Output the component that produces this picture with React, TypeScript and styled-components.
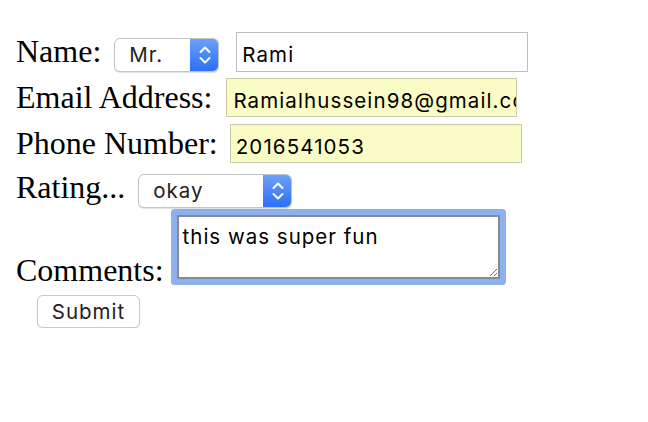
import React from "react";
import styled, { createGlobalStyle } from "styled-components";

const Global = createGlobalStyle`
  html, body { margin: 0; padding: 0; background: #fff; }
  body { font-family: "Liberation Serif", "Times New Roman", serif; color: #000; }
`;

const Form = styled.form`
  display: flex;
  flex-direction: column;
  align-items: flex-start;
  gap: 6px;
  padding: 32px 0 0 16px;
`;

const Row = styled.div<{ $align?: string; $mt?: number }>`
  display: flex;
  align-items: ${(p) => p.$align || "baseline"};
  margin-top: ${(p) => p.$mt || 0}px;
`;

const Label = styled.label<{ $gap: number }>`
  font-family: "Liberation Serif", "Times New Roman", serif;
  font-size: 32px;
  line-height: normal;
  margin-right: ${(p) => p.$gap}px;
  white-space: nowrap;
`;

const uiFont = `"Inter", "Liberation Sans", Arial, sans-serif`;

const SelectBox = styled.div<{ $w: number }>`
  display: inline-flex;
  align-items: baseline;
  box-sizing: border-box;
  width: ${(p) => p.$w}px;
  height: 34px;
  border: 1px solid #c4c4c4;
  border-radius: 6px;
  background: #fff;
  box-shadow: 0 1px 1px rgba(0, 0, 0, 0.12);
  font-family: ${uiFont};
  font-size: 20.5px;
  letter-spacing: 1px;
  color: #222;
  overflow: hidden;
  position: relative;
`;

const SelectText = styled.span`
  flex: 1;
  padding: 3px 0 0 14px;
  line-height: 26px;
`;

const SelectArrow = styled.span`
  position: absolute;
  top: -1px;
  right: -1px;
  bottom: -1px;
  width: 29px;
  border-radius: 0 6px 6px 0;
  background: linear-gradient(#6ea1f8, #2b6ef5);
  display: flex;
  align-items: center;
  justify-content: center;
`;

const TextInput = styled.input<{ $w: number; $h: number; $fill?: boolean; $pl: number }>`
  box-sizing: border-box;
  width: ${(p) => p.$w}px;
  height: ${(p) => p.$h}px;
  padding: 5px 0 0 ${(p) => p.$pl}px;
  margin: 0;
  border: 1px solid ${(p) => (p.$fill ? "#c9c9a6" : "#bdbdbd")};
  border-radius: 0;
  background: ${(p) => (p.$fill ? "#fafcc5" : "#fff")};
  font-family: ${uiFont};
  font-size: 20.5px;
  letter-spacing: 1.1px;
  color: #000;
  outline: none;
`;

const TextArea = styled.textarea`
  box-sizing: border-box;
  width: 323px;
  height: 64px;
  margin: 0 0 10px 0;
  padding: 8px 4px 4px;
  border: 2px solid #8a8a8a;
  border-radius: 1px;
  box-shadow: 0 0 0 6px #8eb0f1;
  font-family: ${uiFont};
  font-size: 20.5px;
  letter-spacing: 1px;
  line-height: 24px;
  color: #000;
  outline: none;
  resize: both;
`;

const Button = styled.button`
  box-sizing: border-box;
  width: 103px;
  height: 33px;
  margin: 0 0 0 21px;
  padding: 0;
  border: 1px solid #c9c9c9;
  border-radius: 6px;
  background: #fff;
  box-shadow: 0 1px 1px rgba(0, 0, 0, 0.1);
  font-family: ${uiFont};
  font-size: 20.5px;
  letter-spacing: 1px;
  color: #222;
`;

const Chevrons = () => (
  <svg width="12" height="18" viewBox="0 0 12 18" fill="none">
    <polyline points="1.5,6 6,1.5 10.5,6" stroke="#fff" strokeWidth="2" strokeLinecap="round" strokeLinejoin="round" />
    <polyline points="1.5,12 6,16.5 10.5,12" stroke="#fff" strokeWidth="2" strokeLinecap="round" strokeLinejoin="round" />
  </svg>
);

const Select = ({ value, w }: { value: string; w: number }) => (
  <SelectBox $w={w}>
    <SelectText>{value}</SelectText>
    <SelectArrow>
      <Chevrons />
    </SelectArrow>
  </SelectBox>
);

export default function App() {
  return (
    <>
      <Global />
      <Form onSubmit={(e) => e.preventDefault()}>
        <Row>
          <Label $gap={13}>Name:</Label>
          <Select value="Mr." w={105} />
          <TextInput style={{ marginLeft: 17 }} $w={292} $h={40} $pl={5} defaultValue="Rami" />
        </Row>
        <Row>
          <Label $gap={14}>Email Address:</Label>
          <TextInput $w={291} $h={39} $pl={6} $fill defaultValue="Ramialhussein98@gmail.com" />
        </Row>
        <Row $mt={1}>
          <Label $gap={12}>Phone Number:</Label>
          <TextInput $w={292} $h={39} $pl={5} $fill defaultValue="2016541053" />
        </Row>
        <Row>
          <Label $gap={13}>Rating...</Label>
          <Select value="okay" w={154} />
        </Row>
        <Row $align="flex-end" $mt={1}>
          <Label $gap={13}>Comments:</Label>
          <TextArea defaultValue="this was super fun" />
        </Row>
        <Button type="submit">Submit</Button>
      </Form>
    </>
  );
}
